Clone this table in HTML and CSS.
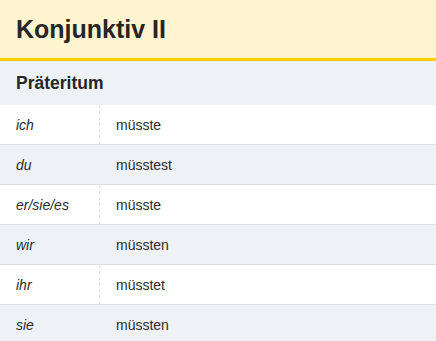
FILE: index.html
```html
<!DOCTYPE html>
<html lang="de">
<head>
<meta charset="utf-8">
<link rel="stylesheet" href="styles.css">
</head>
<body>
<section class="card">
  <h1 class="title">Konjunktiv II</h1>
  <h2 class="tense">Präteritum</h2>
  <table class="conj">
    <tr><td class="pron">ich</td><td class="form">müsste</td></tr>
    <tr><td class="pron">du</td><td class="form">müsstest</td></tr>
    <tr><td class="pron">er/sie/es</td><td class="form">müsste</td></tr>
    <tr><td class="pron">wir</td><td class="form">müssten</td></tr>
    <tr><td class="pron">ihr</td><td class="form">müsstet</td></tr>
    <tr><td class="pron">sie</td><td class="form">müssten</td></tr>
  </table>
</section>
</body>
</html>
```
FILE: styles.css
```css
html, body {
  margin: 0;
  padding: 0;
  background: #fff;
}
body {
  font-family: "Liberation Sans", Arial, sans-serif;
  color: #2b2b2b;
}
.card {
  width: 436px;
}
.title {
  margin: 0;
  box-sizing: border-box;
  height: 61px;
  padding: 1px 16px 0;
  display: flex;
  align-items: center;
  background: #fff4d0;
  border-bottom: 3px solid #ffcc00;
  font-size: 25px;
  font-weight: bold;
  color: #262626;
}
.tense {
  margin: 0;
  height: 44px;
  box-sizing: border-box;
  padding: 0 16px;
  display: flex;
  align-items: center;
  background: #eef1f5;
  font-size: 17.5px;
  font-weight: bold;
  color: #262626;
}
.conj {
  width: 100%;
  border-collapse: separate;
  border-spacing: 0;
  font-size: 14px;
}
.conj td {
  height: 40px;
  box-sizing: border-box;
  padding: 0 16px;
  vertical-align: middle;
  border-bottom: 1px solid #dcdfe3;
}
.conj tr:nth-child(even) td {
  background: #eef1f5;
}
.pron {
  width: 100px;
  font-style: italic;
  background-image: linear-gradient(#dcdfe3 50%, transparent 50%);
  background-size: 1px 6px;
  background-repeat: repeat-y;
  background-position: right top;
}
.conj tr:nth-child(even) .pron {
  background-color: #eef1f5;
}
.form {
  padding-left: 16px;
  color: #2b2b2b;
}
```
